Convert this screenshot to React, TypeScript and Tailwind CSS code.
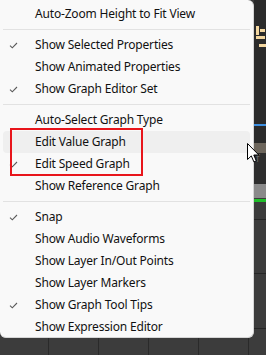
import React from "react";

type Item = { label: string; checked?: boolean; hover?: boolean } | "sep";

const items: Item[] = [
  { label: "Auto-Zoom Height to Fit View" },
  "sep",
  { label: "Show Selected Properties", checked: true },
  { label: "Show Animated Properties" },
  { label: "Show Graph Editor Set", checked: true },
  "sep",
  { label: "Auto-Select Graph Type" },
  { label: "Edit Value Graph", hover: true },
  { label: "Edit Speed Graph", checked: true },
  { label: "Show Reference Graph" },
  "sep",
  { label: "Snap", checked: true },
  { label: "Show Audio Waveforms" },
  { label: "Show Layer In/Out Points" },
  { label: "Show Layer Markers" },
  { label: "Show Graph Tool Tips", checked: true },
  { label: "Show Expression Editor" },
];

function Check() {
  return (
    <svg width="9" height="7" viewBox="0 0 9 7" fill="none">
      <path d="M1 3.6 L3.3 5.8 L8 1" stroke="#5a5a5a" strokeWidth="1.1" />
    </svg>
  );
}

function Cursor() {
  return (
    <svg width="13" height="20" viewBox="0 0 13 20">
      <path
        d="M0.5 0.5 L0.5 16.5 L4.3 12.9 L6.9 18.9 L9.3 17.9 L6.8 12 L11.8 12 Z"
        fill="#fff"
        stroke="#000"
        strokeWidth="1"
        strokeLinejoin="round"
      />
    </svg>
  );
}

export default function App() {
  return (
    <div
      className="relative flex h-[355px] w-[266px] overflow-hidden bg-[#3c3c3c]"
      style={{ fontFamily: '"Noto Sans", "Open Sans", sans-serif' }}
    >
      {/* left column: menu area + timeline grid below */}
      <div className="flex w-[254px] flex-col">
        <div className="h-[338px] rounded-b-md rounded-tr-md border-b border-r border-[#d6d6d6] bg-[#f9f9f9] pt-[3px]">
          {items.map((item, i) =>
            item === "sep" ? (
              <div key={i} className="flex h-[9px] items-center px-[3px]">
                <div className="h-px w-full bg-[#e2e2e2]" />
              </div>
            ) : (
              <div
                key={i}
                className={`mx-[3px] flex h-[22px] items-center rounded-[4px] ${
                  item.hover ? "bg-[#efefef]" : ""
                }`}
              >
                <div className="flex w-[32px] justify-center pl-[2px] pr-[14px]">
                  {item.checked && <Check />}
                </div>
                <span className="text-[12px] leading-none tracking-[-0.18px] text-[#111]">
                  {item.label}
                </span>
              </div>
            ),
          )}
        </div>
        <div className="flex flex-1">
          <div className="w-[49px] border-r border-[#2a2a2a]" />
          <div className="w-[50px] border-r border-[#2a2a2a]" />
          <div className="w-[50px] border-r border-[#2a2a2a]" />
          <div className="w-[50px] border-r border-[#2a2a2a]" />
          <div className="w-[50px] border-r border-[#2a2a2a]" />
        </div>
      </div>

      {/* right strip of the graph editor behind the menu */}
      <div className="flex w-[12px] flex-col">
        <div className="flex h-[124px] flex-col bg-[#2b2b2b] pl-[2px] pt-[26px]">
          <div className="flex items-end gap-[1px]">
            <div className="h-[9px] w-[3px] bg-[#f3d7a0]" />
            <div className="mb-[3px] h-[3px] w-[5px] bg-[#f3d7a0]" />
          </div>
          <div className="mt-[1px] h-[3px] w-[9px] bg-[#f3d7a0]" />
          <div className="ml-[3px] mt-[5px] h-[3px] w-[7px] bg-[#f3d7a0]" />
        </div>
        <div className="h-[2px] bg-[#3d8fe0]" />
        <div className="h-[17px] bg-[#2b2b2b]" />
        <div className="h-[10px] bg-[#6d665c]" />
        <div className="h-[31px] bg-[#2e2e2e] pl-[2px] text-[10px] leading-none text-[#6a6a6a]">f</div>
        <div className="h-[14px] bg-[#8a8a8a]" />
        <div className="h-px bg-[#3c3c3c]" />
        <div className="h-[3px] bg-[#1fbf2a]" />
        <div className="h-[18px] border-b border-[#262626]" />
        <div className="h-[54px] border-b border-[#262626]" />
        <div className="h-[55px] border-b border-[#262626]" />
        <div className="flex-1" />
      </div>

      {/* annotation box */}
      <div className="pointer-events-none absolute left-[10px] top-[128px] h-[48px] w-[133px] border-2 border-[#e8151b]" />

      {/* mouse pointer */}
      <div className="pointer-events-none absolute left-[247px] top-[143px]">
        <Cursor />
      </div>
    </div>
  );
}
